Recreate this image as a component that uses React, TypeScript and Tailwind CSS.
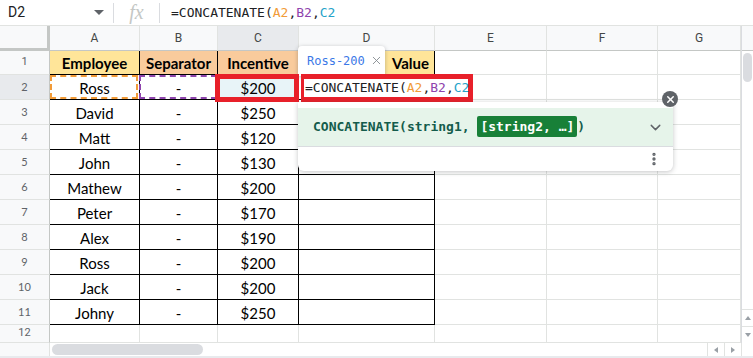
import { ChevronDown, EllipsisVertical, X } from 'lucide-react';

const rows = [
  ['Ross', '-', '$200'],
  ['David', '-', '$250'],
  ['Matt', '-', '$120'],
  ['John', '-', '$130'],
  ['Mathew', '-', '$200'],
  ['Peter', '-', '$170'],
  ['Alex', '-', '$190'],
  ['Ross', '-', '$200'],
  ['Jack', '-', '$200'],
  ['Johny', '-', '$250'],
];

const cols = ['A', 'B', 'C', 'D', 'E', 'F', 'G'];

const mono = { fontFamily: '"DejaVu Sans Mono", "Liberation Mono", monospace' };

function ColHeaders() {
  return (
    <>
      <div className="bg-[#f8f9fa] border-r-[3px] border-b-[3px] border-[#c4c7c5]" />
      {cols.map((c) => (
        <div
          key={c}
          className={
            c === 'C'
              ? 'flex items-center justify-center bg-[#e8eaed] border-r border-b border-r-[#e1e3e1] border-b-[#c4c7c5] text-[12px] text-[#444746]'
              : 'flex items-center justify-center bg-[#f8f9fa] border-r border-b border-r-[#e1e3e1] border-b-[#c4c7c5] text-[12px] text-[#444746]'
          }
        >
          {c}
        </div>
      ))}
    </>
  );
}

function RowHead({ n }: { n: number }) {
  return (
    <div
      className={
        n === 2
          ? 'flex items-center justify-center bg-[#e8eaed] border-r border-b border-r-[#c4c7c5] border-b-[#e1e3e1] text-[11px] text-[#5f6368]'
          : 'flex items-center justify-center bg-[#f8f9fa] border-r border-b border-r-[#c4c7c5] border-b-[#e1e3e1] text-[11px] text-[#5f6368]'
      }
    >
      {n}
    </div>
  );
}

function Blank({ n }: { n: number }) {
  return (
    <>
      {Array.from({ length: n }).map((_, i) => (
        <div key={i} className="border-r border-b border-[#e1e3e1] bg-white" />
      ))}
    </>
  );
}

function DataCell({ text, extra }: { text: string; extra?: 'orange' | 'purple' | 'blue' }) {
  return (
    <div
      className={
        extra === 'blue'
          ? 'relative flex items-center justify-center pt-[2px] border-r border-b border-black bg-[#e8f4f8] text-[15px] text-black'
          : 'relative flex items-center justify-center pt-[2px] border-r border-b border-black bg-white text-[15px] text-black'
      }
    >
      {text}
      {extra === 'orange' && (
        <div className="absolute left-0 top-0 right-[1px] bottom-0 border-2 border-dashed border-[#f29b38]" />
      )}
      {extra === 'purple' && (
        <div className="absolute left-[-1px] top-0 right-0 bottom-0 border-2 border-dashed border-[#8e44ad]" />
      )}
    </div>
  );
}

function HeadCell({ text, bg, right }: { text: string; bg: 'yellow' | 'orange'; right?: boolean }) {
  if (right) {
    return (
      <div className="flex items-center justify-end pr-[5px] pt-[1px] border-r border-b border-black bg-[#ffe599] text-[15px] font-bold text-black">
        {text}
      </div>
    );
  }
  return (
    <div
      className={
        bg === 'yellow'
          ? 'flex items-center justify-center pt-[1px] border-r border-b border-black bg-[#ffe599] text-[15px] font-bold text-black'
          : 'flex items-center justify-center pt-[1px] border-r border-b border-black bg-[#f9cb9c] text-[15px] font-bold text-black'
      }
    >
      {text}
    </div>
  );
}

function Toolbar() {
  return (
    <div className="flex h-[26px] items-center border-b border-[#e1e3e1] bg-white">
      <div className="flex w-[113px] items-center pl-[8px] pr-[8px] text-[14px] text-[#202124]">
        <span className="flex-1">D2</span>
        <svg width="10" height="6" viewBox="0 0 10 6" className="mr-[1px]">
          <path d="M0 0 L10 0 L5 5 Z" fill="#5f6368" />
        </svg>
      </div>
      <div className="h-[20px] w-px bg-[#dadce0]" />
      <div
        className="flex w-[45px] justify-center pb-[2px] text-[20px] italic text-[#c4c7c5]"
        style={{ fontFamily: '"Liberation Serif", serif' }}
      >
        fx
      </div>
      <div className="h-[20px] w-px bg-[#dadce0]" />
      <div className="pl-[11px] text-[13px] text-[#202124]" style={mono}>
        =CONCATENATE(<span className="text-[#f29b38]">A2</span>,
        <span className="text-[#8e44ad]">B2</span>,<span className="text-[#26a3c9]">C2</span>
      </div>
    </div>
  );
}

export default function App() {
  return (
    <div
      className="relative h-[358px] w-[753px] overflow-hidden bg-white"
      style={{ fontFamily: 'Roboto, "Noto Sans", sans-serif' }}
    >
      <Toolbar />

      <div className="flex">
        <div
          className="grid grid-cols-[50px_90px_78px_81px_136px_112px_111px_83px] grid-rows-[25px_24px_repeat(10,25px)_18px]"
        >
          <ColHeaders />

          <RowHead n={1} />
          <div className="contents" style={{ fontFamily: 'Lato, "Open Sans", sans-serif' }}>
            <HeadCell text="Employee" bg="yellow" />
            <HeadCell text="Separator" bg="orange" />
            <HeadCell text="Incentive" bg="orange" />
            <HeadCell text="Value" bg="yellow" right />
          </div>
          <Blank n={3} />

          {rows.map((r, i) => (
            <div key={i} className="contents" style={{ fontFamily: 'Lato, "Open Sans", sans-serif' }}>
              <RowHead n={i + 2} />
              <DataCell text={r[0]} extra={i === 0 ? 'orange' : undefined} />
              <DataCell text={r[1]} extra={i === 0 ? 'purple' : undefined} />
              <DataCell text={r[2]} extra={i === 0 ? 'blue' : undefined} />
              <div className="border-r border-b border-black bg-white" />
              <Blank n={3} />
            </div>
          ))}

          <RowHead n={12} />
          <Blank n={7} />
        </div>

        {/* vertical scrollbar */}
        <div className="flex w-[12px] flex-col border-l border-[#dadce0] bg-white">
          <div className="h-[25px] border-b border-[#c4c7c5] bg-[#f8f9fa]" />
          <div className="ml-[1px] mt-[2px] h-[29px] w-[9px] rounded-full bg-[#dadce0]" />
          <div className="flex-1" />
          <div className="flex h-[17px] items-center justify-center border-t border-[#e1e3e1]">
            <svg width="6" height="4" viewBox="0 0 6 4">
              <path d="M0 4 L6 4 L3 0 Z" fill="#9aa0a6" />
            </svg>
          </div>
          <div className="flex h-[17px] items-center justify-center border-t border-[#e1e3e1]">
            <svg width="6" height="4" viewBox="0 0 6 4">
              <path d="M0 0 L6 0 L3 4 Z" fill="#9aa0a6" />
            </svg>
          </div>
        </div>
      </div>

      {/* horizontal scrollbar */}
      <div className="flex h-[15px] border-b-2 border-[#e8eaed]">
        <div className="w-[50px] border-r border-[#e1e3e1] bg-[#f8f9fa]" />
        <div className="flex flex-1 items-center pl-[2px]">
          <div className="h-[11px] w-[151px] rounded-full bg-[#dadce0]" />
          <div className="flex-1" />
          <div className="flex h-full w-[17px] items-center justify-center border-l border-[#e1e3e1]">
            <svg width="4" height="6" viewBox="0 0 4 6">
              <path d="M4 0 L4 6 L0 3 Z" fill="#9aa0a6" />
            </svg>
          </div>
          <div className="flex h-full w-[17px] items-center justify-center border-l border-[#e1e3e1]">
            <svg width="4" height="6" viewBox="0 0 4 6">
              <path d="M0 0 L0 6 L4 3 Z" fill="#9aa0a6" />
            </svg>
          </div>
          <div className="h-full w-[12px] border-l border-[#e1e3e1]" />
        </div>
      </div>

      {/* result preview chip */}
      <div className="absolute left-[298px] top-[46px] flex h-[30px] w-[87px] items-start rounded-t-[4px] bg-white pl-[9px] pt-[6px] shadow-[0_1px_4px_rgba(60,64,67,0.35)]">
        <span className="text-[12px] text-[#3b78e7]" style={mono}>
          Ross-200
        </span>
        <X size={13} strokeWidth={1.6} className="ml-[5px] mt-[2px] text-[#80868b]" />
      </div>

      {/* referenced cell highlight */}
      <div className="absolute left-[215px] top-[74px] h-[28px] w-[84px] border-[5px] border-[#e8202a]" />

      {/* in-cell editor */}
      <div className="absolute left-[301px] top-[74px] flex h-[28px] w-[172px] items-center border-[5px] border-l-[3px] border-[#e8202a] bg-white pl-[1px] text-[13px] text-[#202124]">
        <span style={mono} className="whitespace-nowrap">
          =CONCATENATE(<span className="text-[#f29b38]">A2</span>,
          <span className="text-[#8e44ad]">B2</span>,<span className="text-[#26a3c9]">C2</span>
        </span>
      </div>

      {/* formula help popup */}
      <div className="absolute left-[298px] top-[102px] w-[375px] overflow-hidden rounded-b-[6px] bg-white pt-[6px] shadow-[0_1px_5px_rgba(60,64,67,0.3)]">
        <div className="flex h-[39px] items-center border-b border-[#dadce0] bg-[#e6f4ea] pl-[15px] pr-[9px]">
          <span className="whitespace-nowrap text-[13px] font-bold text-[#145c4c]" style={mono}>
            CONCATENATE(string1,{' '}
            <span className="rounded-[2px] bg-[#188038] px-[3px] py-[3px] text-white">[string2, …]</span>)
          </span>
          <div className="flex-1" />
          <ChevronDown size={17} strokeWidth={2} className="text-[#5f6368]" />
        </div>
        <div className="flex h-[24px] items-center justify-end pr-[11px]">
          <EllipsisVertical size={16} strokeWidth={3} className="text-[#5f6368]" />
        </div>
      </div>

      {/* close button */}
      <div className="absolute left-[662px] top-[91px] flex h-[16px] w-[16px] items-center justify-center rounded-full bg-[#5f6368]">
        <X size={11} strokeWidth={3.2} className="text-white" />
      </div>
    </div>
  );
}
